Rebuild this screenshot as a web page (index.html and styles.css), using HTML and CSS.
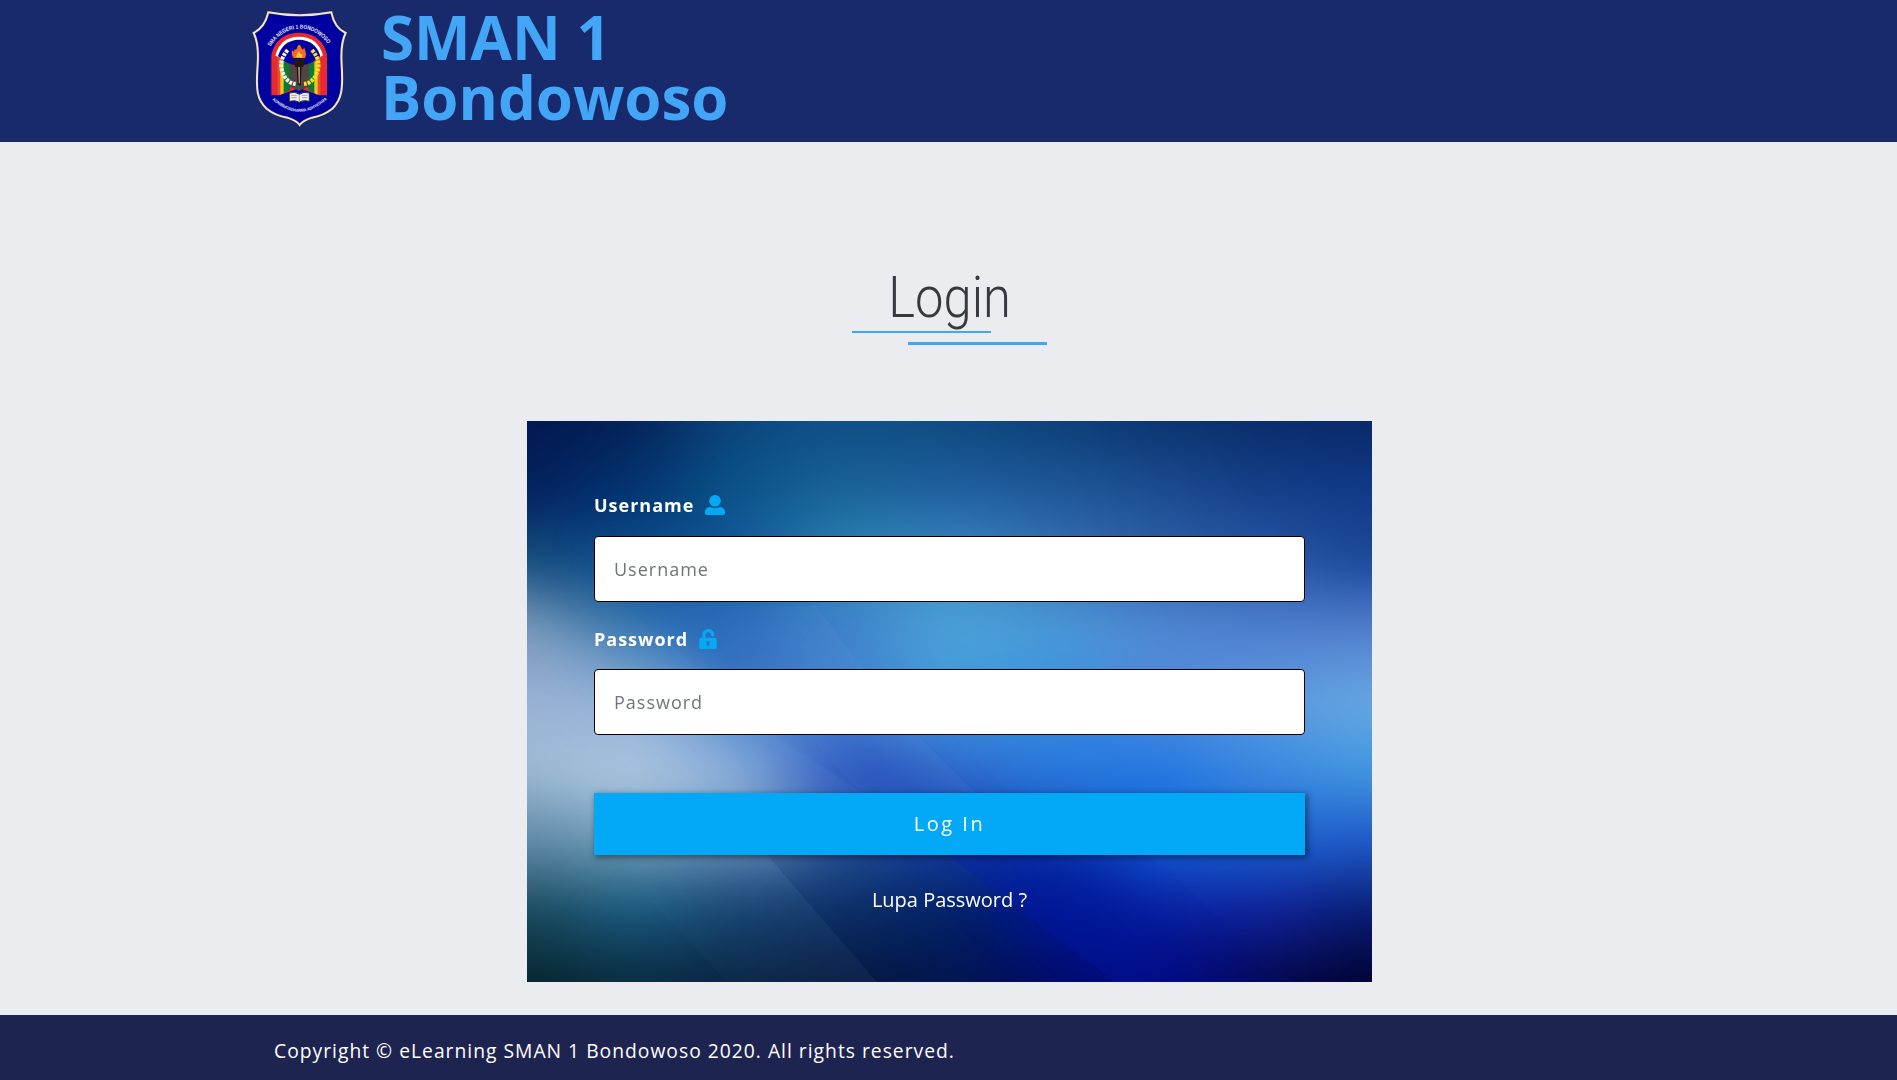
FILE: index.html
```html
<!DOCTYPE html>
<html lang="id">
<head>
<meta charset="utf-8">
<title>eLearning SMAN 1 Bondowoso</title>
<link rel="stylesheet" href="styles.css">
</head>
<body>
<header class="header">
  <svg class="logo" viewBox="36 30 288 351" aria-label="Logo">
    <defs>
      <path id="arcTop" d="M91 140 Q127 86 180 86 T270 140"/>
      <path id="arcBottom" d="M97 299 Q177 372 259 299"/>
    </defs>
    <path d="M85 37 Q179 55 274 37 Q283 83 317 99 Q301 130 305 194 C310 270 304 300 277 326 Q250 347 216 353 Q188 362 179 375 Q170 362 142 353 Q106 347 80 326 C51 300 47 270 53 194 Q57 130 41 99 Q74 83 85 37Z" fill="#0000a0" stroke="#302c3c" stroke-width="9"/>
    <path d="M85 37 Q179 55 274 37 Q283 83 317 99 Q301 130 305 194 C310 270 304 300 277 326 Q250 347 216 353 Q188 362 179 375 Q170 362 142 353 Q106 347 80 326 C51 300 47 270 53 194 Q57 130 41 99 Q74 83 85 37Z" fill="none" stroke="#f0e4da" stroke-width="6"/>
    <path d="M94 164 Q110 99 177 98 Q245 99 261 164 V286 H237 L178 264 L119 286 H94Z" fill="#e9292d"/>
    <path d="M106 166 Q121 111 177 110 Q234 111 249 166 L222 184 H133Z" fill="#fff"/>
    <path d="M114 168 Q129 120 177 119 Q226 120 241 168 L215 194 H140Z" fill="#0000a0"/>
    <path d="M113 169 L134 184 V278 L113 286Z" fill="#e6532b"/>
    <path d="M241 169 L221 184 V278 L241 286Z" fill="#e6532b"/>
    <path d="M121 180 L136 190 V277 L121 284Z M233 180 L219 190 V277 L233 284Z" fill="#f3c529"/>
    <path d="M131 184 L150 192 V270 L131 280Z M223 184 L205 192 V270 L223 280Z" fill="#087c36"/>
    <path d="M148 190 L177 204 L207 190 V260 L177 272 L148 260Z" fill="#514442"/>
    <g fill="none" stroke="#f5f5e8" stroke-width="12" stroke-dasharray="9 3"><path d="M143 150 Q112 186 130 222 Q143 250 167 252"/></g>
    <g fill="none" stroke="#f4e52a" stroke-width="12" stroke-dasharray="9 3"><path d="M216 150 Q247 186 229 222 Q216 250 192 252"/></g>
    <path d="M160 176 H195 L190 201 H185 L182 256 H173 L170 201 H165Z" fill="#211719"/>
    <path d="M174 201 H180 V250 H176Z" fill="#9e8077"/>
    <path d="M161 174 Q153 165 156 150 Q163 160 164 146 Q169 154 172 140 Q179 127 185 145 Q190 154 192 141 Q202 164 195 174Z" fill="#f36b22"/>
    <path d="M169 172 Q169 160 178 153 Q181 166 187 163 L186 173Z" fill="#ffc343"/>
    <path d="M177 255 Q186 262 177 274 Q167 262 177 255Z" fill="#286056"/>
    <path d="M148 279 Q166 273 178 283 Q191 273 208 279 V304 Q189 299 178 307 Q166 299 148 304Z" fill="#eee" stroke="#33322e" stroke-width="3"/>
    <path d="M178 283 V307 M154 286 H170 M154 293 H170 M186 286 H202 M186 293 H202" stroke="#85837c" stroke-width="2"/>
    <text class="logo-top"><textPath href="#arcTop" textLength="208" lengthAdjust="spacingAndGlyphs">SMA NEGERI 1 BONDOWOSO</textPath></text>
    <text class="logo-bottom"><textPath href="#arcBottom" textLength="184" lengthAdjust="spacingAndGlyphs">ADHIBRATADHARMA ADHYATAMA</textPath></text>
  </svg>
  <h1 class="brand">SMAN 1<br>Bondowoso</h1>
</header>
<main class="main">
  <div class="heading"><h2 class="heading-text">Login</h2></div>
  <section class="card">
    <svg class="card-bg" viewBox="0 0 845 561" preserveAspectRatio="none" aria-hidden="true">
      <defs>
        <filter id="soft" filterUnits="userSpaceOnUse" x="-200" y="-80" width="1245" height="721" color-interpolation-filters="sRGB"><feGaussianBlur stdDeviation="42 16"/></filter>
        <filter id="haze" filterUnits="userSpaceOnUse" x="-100" y="-100" width="1045" height="761" color-interpolation-filters="sRGB"><feGaussianBlur stdDeviation="22"/></filter>
        <linearGradient id="c0" gradientUnits="userSpaceOnUse" x1="0" y1="0" x2="0" y2="561"><stop stop-color="#02184f"/><stop offset=".125" stop-color="#03205f"/><stop offset=".25" stop-color="#155080"/><stop offset=".375" stop-color="#6c8cb0"/><stop offset=".5" stop-color="#94aad2"/><stop offset=".625" stop-color="#9ab8d0"/><stop offset=".75" stop-color="#5f88a8"/><stop offset=".875" stop-color="#18485a"/><stop offset="1" stop-color="#062530"/></linearGradient>
        <linearGradient id="c1" gradientUnits="userSpaceOnUse" x1="0" y1="0" x2="0" y2="561"><stop stop-color="#042058"/><stop offset=".125" stop-color="#033470"/><stop offset=".25" stop-color="#0c4a88"/><stop offset=".375" stop-color="#3a7cb4"/><stop offset=".5" stop-color="#88acd4"/><stop offset=".625" stop-color="#a8c2de"/><stop offset=".75" stop-color="#6f9fb8"/><stop offset=".875" stop-color="#185a80"/><stop offset="1" stop-color="#0c2c40"/></linearGradient>
        <linearGradient id="c2" gradientUnits="userSpaceOnUse" x1="0" y1="0" x2="0" y2="561"><stop stop-color="#0b467c"/><stop offset=".125" stop-color="#0a5589"/><stop offset=".25" stop-color="#1458a0"/><stop offset=".375" stop-color="#3070c0"/><stop offset=".5" stop-color="#4a84d0"/><stop offset=".625" stop-color="#80a8d8"/><stop offset=".75" stop-color="#5580b0"/><stop offset=".875" stop-color="#12406f"/><stop offset="1" stop-color="#0a2444"/></linearGradient>
        <linearGradient id="c3" gradientUnits="userSpaceOnUse" x1="0" y1="0" x2="0" y2="561"><stop stop-color="#105084"/><stop offset=".125" stop-color="#1a6498"/><stop offset=".25" stop-color="#3088b8"/><stop offset=".375" stop-color="#3f80cc"/><stop offset=".5" stop-color="#4080d0"/><stop offset=".625" stop-color="#3560c4"/><stop offset=".75" stop-color="#2858a0"/><stop offset=".875" stop-color="#0d3068"/><stop offset="1" stop-color="#071a40"/></linearGradient>
        <linearGradient id="c4" gradientUnits="userSpaceOnUse" x1="0" y1="0" x2="0" y2="561"><stop stop-color="#0d4a80"/><stop offset=".125" stop-color="#2060a0"/><stop offset=".25" stop-color="#3c8cc4"/><stop offset=".375" stop-color="#4ca4d8"/><stop offset=".5" stop-color="#4098dc"/><stop offset=".625" stop-color="#3068cc"/><stop offset=".75" stop-color="#103c9c"/><stop offset=".875" stop-color="#04246a"/><stop offset="1" stop-color="#031650"/></linearGradient>
        <linearGradient id="c5" gradientUnits="userSpaceOnUse" x1="0" y1="0" x2="0" y2="561"><stop stop-color="#0d4078"/><stop offset=".125" stop-color="#1f5898"/><stop offset=".25" stop-color="#3a75b8"/><stop offset=".375" stop-color="#4a98d8"/><stop offset=".5" stop-color="#3590e0"/><stop offset=".625" stop-color="#2878dc"/><stop offset=".75" stop-color="#1244b8"/><stop offset=".875" stop-color="#001890"/><stop offset="1" stop-color="#020c68"/></linearGradient>
        <linearGradient id="c6" gradientUnits="userSpaceOnUse" x1="0" y1="0" x2="0" y2="561"><stop stop-color="#0a3570"/><stop offset=".125" stop-color="#1c4c90"/><stop offset=".25" stop-color="#3060a8"/><stop offset=".375" stop-color="#5088d4"/><stop offset=".5" stop-color="#5088dc"/><stop offset=".625" stop-color="#2278e2"/><stop offset=".75" stop-color="#105cd4"/><stop offset=".875" stop-color="#0c22a4"/><stop offset="1" stop-color="#020470"/></linearGradient>
        <linearGradient id="c7" gradientUnits="userSpaceOnUse" x1="0" y1="0" x2="0" y2="561"><stop stop-color="#0a2c6a"/><stop offset=".125" stop-color="#143f88"/><stop offset=".25" stop-color="#2858a8"/><stop offset=".375" stop-color="#5080d0"/><stop offset=".5" stop-color="#5c98e0"/><stop offset=".625" stop-color="#3a88e0"/><stop offset=".75" stop-color="#1a60d0"/><stop offset=".875" stop-color="#10209a"/><stop offset="1" stop-color="#060850"/></linearGradient>
        <linearGradient id="c8" gradientUnits="userSpaceOnUse" x1="0" y1="0" x2="0" y2="561"><stop stop-color="#0a2868"/><stop offset=".125" stop-color="#103a88"/><stop offset=".25" stop-color="#1a4898"/><stop offset=".375" stop-color="#5480d0"/><stop offset=".5" stop-color="#68a8e0"/><stop offset=".625" stop-color="#4098e0"/><stop offset=".75" stop-color="#2058c8"/><stop offset=".875" stop-color="#081c70"/><stop offset="1" stop-color="#000230"/></linearGradient>
        <linearGradient id="fadeL" x1="1" x2="0" y1="0" y2=".3"><stop stop-color="#fff" stop-opacity=".12"/><stop offset="1" stop-color="#fff" stop-opacity="0"/></linearGradient>
        <linearGradient id="fadeD" x1="0" x2=".7" y1=".3" y2="0"><stop stop-color="#0018a0" stop-opacity=".35"/><stop offset="1" stop-color="#0018a0" stop-opacity="0"/></linearGradient>
      </defs>
      <g filter="url(#soft)">
        <rect x="-200" y="-80" width="254" height="721" fill="url(#c0)"/>
        <rect x="53" y="-80" width="106" height="721" fill="url(#c1)"/>
        <rect x="158" y="-80" width="107" height="721" fill="url(#c2)"/>
        <rect x="264" y="-80" width="106" height="721" fill="url(#c3)"/>
        <rect x="369" y="-80" width="107" height="721" fill="url(#c4)"/>
        <rect x="475" y="-80" width="107" height="721" fill="url(#c5)"/>
        <rect x="581" y="-80" width="106" height="721" fill="url(#c6)"/>
        <rect x="686" y="-80" width="107" height="721" fill="url(#c7)"/>
        <rect x="792" y="-80" width="254" height="721" fill="url(#c8)"/>
      </g>
      <g filter="url(#haze)">
        <path d="M270 320 L370 330 L480 440 L390 440Z" fill="#1840b8" opacity=".4"/>
        <path d="M-60 140 L20 190 L220 350 L290 440 L120 420 L-60 300Z" fill="#b4cce4" opacity=".22"/>
        <path d="M60 120 L180 150 L290 300 L200 270Z" fill="#1c60b4" opacity=".4"/>
        <path d="M440 436 L560 436 L720 600 L570 600Z" fill="#0010a0" opacity=".35"/>
      </g>
      <path d="M0 108 L174 247 L245 313 L336 372 L200 372 L0 200Z" fill="url(#fadeL)" opacity=".35"/>
      <path d="M289 185 L336 247 L393 317 L448 372 L335 372 L190 220 L110 185Z" fill="url(#fadeL)" opacity=".4"/>
      <path d="M130 313 L185 372 L240 434 L350 561 L200 561 L80 434 L0 340Z" fill="url(#fadeL)" opacity=".4"/>
      <path d="M240 434 L421 434 L569 544 L585 561 L350 561Z" fill="#001040" opacity=".08"/>
      <path d="M421 434 L620 434 L770 561 L588 561Z" fill="url(#fadeD)"/>
    </svg>
    <form class="form">
      <label class="label" for="username">Username
        <svg class="icon icon-user" viewBox="0 0 512 512"><path d="M256 0a150 150 0 1 1 0 300 150 150 0 0 1 0-300zM128 304c70 38 186 38 256 0 72 0 128 56 128 128v32c0 27-21 48-48 48H48c-27 0-48-21-48-48v-32c0-72 56-128 128-128z"/></svg>
      </label>
      <input class="input" id="username" type="text" placeholder="Username">
      <label class="label label-second" for="password">Password
        <svg class="icon icon-lock" viewBox="0 0 448 512"><path d="M400 224H160v-72c0-40 32-72 72-72s72 32 72 72v16c0 13 11 24 24 24h32c13 0 24-11 24-24v-16C384 68 316 0 232 0S80 68 80 152v72H48c-27 0-48 21-48 48v192c0 27 21 48 48 48h352c27 0 48-21 48-48V272c0-27-21-48-48-48zM264 392a40 40 0 0 1-80 0v-48a40 40 0 0 1 80 0z"/></svg>
      </label>
      <input class="input" id="password" type="password" placeholder="Password">
      <button class="button" type="button">Log In</button>
      <a class="forgot">Lupa Password ?</a>
    </form>
  </section>
</main>
<footer class="footer">Copyright © eLearning SMAN 1 Bondowoso 2020. All rights reserved.</footer>
</body>
</html>
```
FILE: styles.css
```css
* { box-sizing: border-box; }
body {
  margin: 0;
  height: 1080px;
  display: flex;
  flex-direction: column;
  overflow: hidden;
  background: #ebecf0;
  font-family: "Open Sans", sans-serif;
}
.header {
  flex: none;
  height: 142px;
  display: flex;
  align-items: flex-start;
  gap: 33px;
  padding: 10px 0 0 252px;
  background: #182a6c;
}
.logo { width: 96px; height: 117px; flex: none; }
.logo-top, .logo-bottom { font-family: "Liberation Sans", sans-serif; font-weight: 700; fill: #e8e8f8; }
.logo-top { font-size: 17px; }
.logo-bottom { font-size: 12.5px; }
.brand {
  margin: -3px 0 0;
  color: #42a5f5;
  font-size: 60px;
  font-weight: 700;
  line-height: 60px;
}
.main {
  flex: none;
  height: 873px;
  display: flex;
  flex-direction: column;
  align-items: center;
  padding-top: 118px;
}
.heading {
  position: relative;
  width: 195px;
  height: 85px;
  margin-right: -2px;
  display: flex;
  justify-content: center;
}
.heading::before, .heading::after {
  content: "";
  position: absolute;
  width: 139px;
  background: #42a5f5;
}
.heading::before { left: 0; top: 71px; height: 2px; }
.heading::after { right: 0; top: 82px; height: 3px; }
.heading-text {
  margin: 0;
  color: #343a40;
  font-family: Roboto, sans-serif;
  font-size: 57.6px;
  font-weight: 300;
  line-height: 76px;
  transform: scaleX(.88);
}
.card {
  position: relative;
  width: 845px;
  height: 561px;
  margin: 76px 0 0 2px;
  padding: 67px;
  overflow: hidden;
}
.card-bg { position: absolute; inset: 0; width: 100%; height: 100%; }
.form { position: relative; display: flex; flex-direction: column; }
.label {
  display: flex;
  align-items: center;
  gap: 11px;
  height: 34px;
  color: #fff;
  font-size: 18px;
  font-weight: 700;
  letter-spacing: 1px;
}
.label-second { margin-top: 20px; }
.icon { fill: #03a9f4; height: 20px; flex: none; }
.icon-user { width: 20px; }
.icon-lock { width: 18px; }
.input {
  width: 100%;
  height: 66px;
  margin: 14px 0 0;
  padding: 0 19px;
  border: 1px solid #000;
  border-radius: 4px;
  background: #fff;
  font: 400 18px "Open Sans", sans-serif;
  letter-spacing: 1px;
}
.label-second + .input { margin-top: 13px; }
.input::placeholder { color: #6c757d; }
.button {
  height: 62px;
  margin: 58px 0 0;
  padding: 0 0 2px;
  border: 0;
  background: #03a9f7;
  box-shadow: 2px 2px 6px 1px rgba(0, 0, 0, .4);
  color: #fff;
  font: 400 20px "Open Sans", sans-serif;
  letter-spacing: 2.5px;
}
.forgot {
  align-self: center;
  margin-top: 30px;
  color: #fff;
  font-size: 20px;
  line-height: 30px;
}
.footer {
  flex: none;
  height: 65px;
  padding: 7px 0 0 274px;
  display: flex;
  align-items: center;
  background: #1e2450;
  color: #fff;
  font-size: 19.3px;
  letter-spacing: 1px;
  line-height: 24px;
}
```
